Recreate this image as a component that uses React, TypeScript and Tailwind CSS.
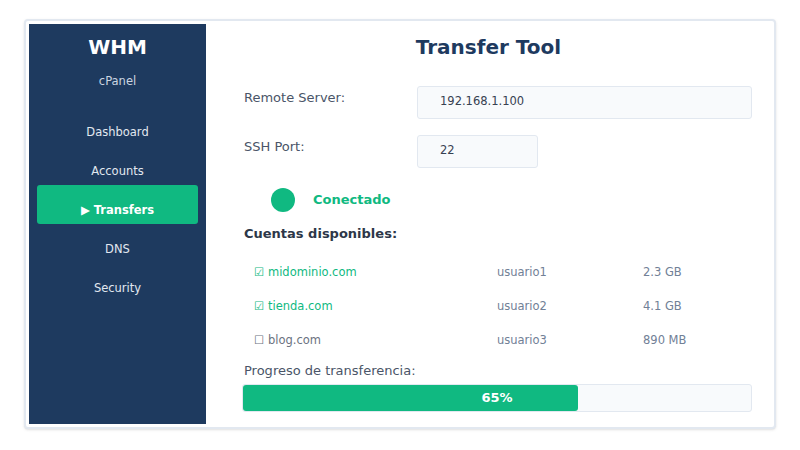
const navItems = ['Dashboard', 'Accounts', 'Transfers', 'DNS', 'Security'];

const accounts = [
  { domain: 'midominio.com', user: 'usuario1', size: '2.3 GB', checked: true },
  { domain: 'tienda.com', user: 'usuario2', size: '4.1 GB', checked: true },
  { domain: 'blog.com', user: 'usuario3', size: '890 MB', checked: false },
];

const Sidebar = () => (
  <aside className="w-[177px] shrink-0 bg-[#1e3a5f] flex flex-col text-center">
    <div className="pt-[11px] leading-[24px] text-[20px] font-bold text-white">WHM</div>
    <div className="mt-[14px] leading-[16px] text-[11.5px] text-[#cbd5e1]">cPanel</div>
    <nav className="mt-[18px] flex flex-col">
      {navItems.map((item) =>
        item === 'Transfers' ? (
          <div
            key={item}
            className="mx-2 h-[39px] pt-[12px] flex items-center justify-center rounded-[3px] bg-[#10b981] text-[11.5px] font-bold text-white"
          >
            ▶ {item}
          </div>
        ) : (
          <div key={item} className="h-[39px] pt-[12px] flex items-center justify-center text-[11.5px] text-[#e2e8f0]">
            {item}
          </div>
        )
      )}
    </nav>
  </aside>
);

const Field = ({ label, value, width }: { label: string; value: string; width: string }) => (
  <div className="flex">
    <div className="ml-[2px] w-[173px] pt-[4px] leading-[16px] text-[13px] text-[#4a5568]">{label}</div>
    <div
      className={`${width} h-[33px] border border-[#e2e8f0] bg-[#f8fafc] rounded-[3px] flex items-center pl-[22px] pb-[2px] text-[11.5px] text-[#374151]`}
    >
      {value}
    </div>
  </div>
);

export default function App() {
  return (
    <div className="w-[800px] h-[450px] bg-white pl-[24px] pt-[19px] font-['DejaVu_Sans',sans-serif]">
      <div className="w-[752px] h-[410px] border-2 border-[#e2e8f0] rounded-[4px] p-[3px] flex bg-white shadow-sm">
        <Sidebar />

        <main className="flex-1 flex flex-col pt-[11px]">
          <h1 className="text-center leading-[24px] text-[20px] font-bold text-[#1e3a5f]">Transfer Tool</h1>

          <div className="pl-[36px] flex flex-col">
            <div className="mt-[27px]">
              <Field label="Remote Server:" value="192.168.1.100" width="w-[335px]" />
            </div>
            <div className="mt-[16px]">
              <Field label="SSH Port:" value="22" width="w-[121px]" />
            </div>

            <div className="mt-[20px] h-[24px] flex items-center">
              <div className="ml-[29px] w-6 h-6 rounded-full bg-[#10b981]" />
              <span className="ml-[18px] text-[13px] font-bold text-[#10b981]">Conectado</span>
            </div>

            <div className="mt-[14px] ml-[2px] leading-[16px] text-[13px] font-bold text-[#2d3748]">
              Cuentas disponibles:
            </div>

            <div className="mt-[14px] flex flex-col">
              {accounts.map((acc) => (
                <div key={acc.domain} className="h-[34px] flex items-center text-[11.5px]">
                  <div className={`ml-[12px] w-[243px] ${acc.checked ? 'text-[#10b981]' : 'text-[#6b7280]'}`}>
                    {acc.checked ? '☑' : '☐'} {acc.domain}
                  </div>
                  <div className="w-[146px] text-[#718096]">{acc.user}</div>
                  <div className="text-[#718096]">{acc.size}</div>
                </div>
              ))}
            </div>

            <div className="mt-[5px] ml-[2px] leading-[16px] text-[13px] text-[#4a5568]">Progreso de transferencia:</div>

            <div className="mt-[5px] relative w-[510px] h-[28px] border border-[#e2e8f0] bg-[#f8fafc] rounded-[3px]">
              <div className="h-full w-[66%] bg-[#10b981] rounded-[3px]" />
              <div className="absolute inset-0 flex items-center justify-center text-[13px] font-bold text-white">65%</div>
            </div>
          </div>
        </main>
      </div>
    </div>
  );
}
